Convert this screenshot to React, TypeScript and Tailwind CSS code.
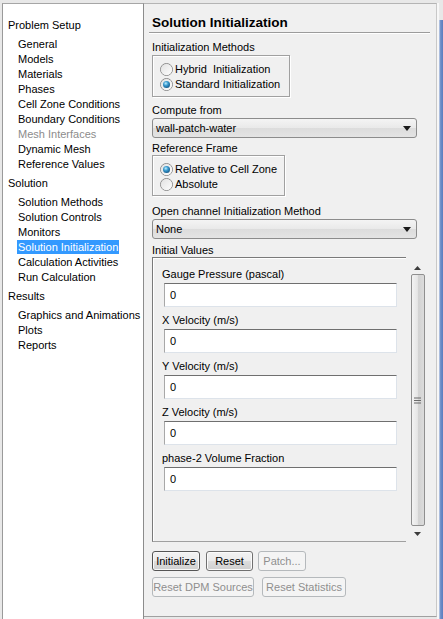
import React from "react";

function Radio({ checked }: { checked: boolean }) {
  return (
    <span className="relative inline-flex items-center justify-center w-[13px] h-[13px] rounded-full border border-[#8a8a8a] bg-[linear-gradient(135deg,#cfcfcf,#f7f7f7)] shrink-0">
      <span className="w-[11px] h-[11px] rounded-full bg-[linear-gradient(135deg,#e2e2e2,#fdfdfd)] flex items-center justify-center">
        {checked && (
          <span className="w-[7px] h-[7px] rounded-full bg-[radial-gradient(circle_at_40%_35%,#bfeefe_0%,#3a9bcf_35%,#155b8c_75%,#0b3c62_100%)]" />
        )}
      </span>
    </span>
  );
}

function RadioRow({ checked, label }: { checked: boolean; label: string }) {
  return (
    <div className="h-[15px] flex items-center gap-[2px] text-black">
      <Radio checked={checked} />
      <span className="leading-[15px] whitespace-pre">{label}</span>
    </div>
  );
}

function Select({ value }: { value: string }) {
  return (
    <div className="mt-[1px] w-[265px] h-[20px] rounded-[3px] border border-[#8c8c8c] bg-[linear-gradient(#f4f4f4,#e9e9e9_50%,#dcdcdc_51%,#e4e4e4)] flex items-center pl-[3px] pr-[5px] justify-between">
      <span className="leading-[18px] text-black">{value}</span>
      <svg width="8" height="5" viewBox="0 0 8 5">
        <polygon points="0,0 8,0 4,5" fill="#1a1a1a" />
      </svg>
    </div>
  );
}

function Field({ label, first }: { label: string; first?: boolean }) {
  return (
    <div className={first ? "pt-[9px]" : "pt-[6px]"}>
      <div className="h-[14px] leading-[14px] text-black">{label}</div>
      <div className="mt-[2px] ml-[2px] w-[233px] h-[24px] bg-white border-t border-l border-t-[#6f6f6f] border-l-[#a8a8a8] border-r border-b border-r-[#dde3ea] border-b-[#dde3ea] flex items-center pl-[5px] text-black">
        0
      </div>
    </div>
  );
}

function Btn({ label, w, disabled, focus }: { label: string; w: string; disabled?: boolean; focus?: boolean }) {
  const cls = disabled
    ? "border-[#b5b9bc] bg-[#f4f4f4] text-[#8f8f8f]"
    : focus
    ? "border-[#555555] bg-[linear-gradient(#f2f2f2,#ebebeb_50%,#dddddd_51%,#cfcfcf)] text-black shadow-[inset_0_0_0_1px_#f8f8f8]"
    : "border-[#707070] bg-[linear-gradient(#f2f2f2,#ebebeb_50%,#dddddd_51%,#cfcfcf)] text-black shadow-[inset_0_0_0_1px_#fbfbfb]";
  return (
    <div className={`${w} h-[20px] rounded-[3px] border flex items-center justify-center leading-[18px] ${cls}`}>
      {label}
    </div>
  );
}

const tree: { header: string; items: string[] }[] = [
  {
    header: "Problem Setup",
    items: [
      "General",
      "Models",
      "Materials",
      "Phases",
      "Cell Zone Conditions",
      "Boundary Conditions",
      "Mesh Interfaces",
      "Dynamic Mesh",
      "Reference Values",
    ],
  },
  {
    header: "Solution",
    items: [
      "Solution Methods",
      "Solution Controls",
      "Monitors",
      "Solution Initialization",
      "Calculation Activities",
      "Run Calculation",
    ],
  },
  { header: "Results", items: ["Graphics and Animations", "Plots", "Reports"] },
];

export default function App() {
  return (
    <div className="w-[443px] h-[619px] overflow-hidden flex bg-[#e8e8e8] pt-[3px] font-['Liberation_Sans',Arial,sans-serif] text-[11px]">
      {/* Left tree */}
      <div className="ml-[2px] w-[142px] h-[616px] bg-white border-l border-t border-r border-l-[#9a9a9a] border-t-[#a6a6a6] border-r-[#8c8c8c] pt-[14px]">
        {tree.map((g, gi) => (
          <div key={g.header} className={gi > 0 ? "mt-[4px]" : ""}>
            <div className="pl-[5px] h-[15px] leading-[15px] text-black">{g.header}</div>
            <div className="mt-[4px]">
              {g.items.map((it) => (
                <div key={it} className="pl-[15px] h-[15px] leading-[15px]">
                  {it === "Solution Initialization" ? (
                    <span className="inline-block bg-[#3399ff] text-white leading-[14px] px-[1px] -ml-[1px]">{it}</span>
                  ) : (
                    <span className={it === "Mesh Interfaces" ? "text-[#8c8c8c]" : "text-black"}>{it}</span>
                  )}
                </div>
              ))}
            </div>
          </div>
        ))}
      </div>

      {/* Right panel */}
      <div className="w-[293px] h-[614px] bg-[#f0f0f0] border-t border-b border-r border-t-[#b4b4b4] border-b-[#a0a0a0] border-r-[#c8c8c8] pl-[8px] flex flex-col">
        <div className="mt-[11px] h-[16px] leading-[16px] text-[13.5px] font-bold text-black">Solution Initialization</div>
        <div className="mt-[1px] -ml-[3px] w-[281px] h-px bg-[#9c9c9c] shadow-[0_1px_0_#ffffff]" />

        <div className="mt-[7px] h-[14px] leading-[14px] text-black">Initialization Methods</div>
        <div className="mt-[1px] w-[138px] border border-[#a0a0a0] shadow-[inset_1px_1px_0_#ffffff,1px_1px_0_#ffffff] pl-[7px] pt-[6px] pb-[4px]">
          <RadioRow checked={false} label="Hybrid  Initialization" />
          <RadioRow checked={true} label="Standard Initialization" />
        </div>

        <div className="mt-[6px] h-[14px] leading-[14px] text-black">Compute from</div>
        <Select value="wall-patch-water" />

        <div className="mt-[4px] h-[13px] leading-[13px] text-black">Reference Frame</div>
        <div className="w-[133px] border border-[#a0a0a0] shadow-[inset_1px_1px_0_#ffffff,1px_1px_0_#ffffff] pl-[7px] pt-[6px] pb-[3px]">
          <RadioRow checked={true} label="Relative to Cell Zone" />
          <RadioRow checked={false} label="Absolute" />
        </div>

        <div className="mt-[8px] h-[14px] leading-[14px] text-black">Open channel Initialization Method</div>
        <Select value="None" />

        <div className="mt-[4px] h-[14px] leading-[14px] text-black">Initial Values</div>
        <div className="flex h-[288px]">
          <div className="w-[254px] h-[285px] border-t border-l border-b border-t-[#7a7a7a] border-l-[#7a7a7a] border-b-[#a0a0a0] shadow-[inset_1px_1px_0_#ffffff] pl-[9px]">
            <Field first label="Gauge Pressure (pascal)" />
            <Field label="X Velocity (m/s)" />
            <Field label="Y Velocity (m/s)" />
            <Field label="Z Velocity (m/s)" />
            <Field label="phase-2 Volume Fraction" />
          </div>
          <div className="ml-[4px] mt-[4px] w-[15px] h-[284px] flex flex-col items-center">
            <div className="h-[13px] flex items-center justify-center">
              <svg width="7" height="4" viewBox="0 0 7 4">
                <polygon points="3.5,0 7,4 0,4" fill="#3c3c3c" />
              </svg>
            </div>
            <div className="w-[14px] h-[252px] rounded-[2px] border border-[#8f8f8f] bg-[linear-gradient(90deg,#f3f3f3,#e6e6e6_45%,#d2d2d2_55%,#dcdcdc)] flex items-center justify-center">
              <svg width="7" height="7" viewBox="0 0 7 7">
                <rect x="0" y="0.5" width="7" height="1" fill="#6a6a6a" />
                <rect x="0" y="3" width="7" height="1" fill="#6a6a6a" />
                <rect x="0" y="5.5" width="7" height="1" fill="#6a6a6a" />
              </svg>
            </div>
            <div className="h-[15px] flex items-center justify-center">
              <svg width="7" height="4" viewBox="0 0 7 4">
                <polygon points="0,0 7,0 3.5,4" fill="#3c3c3c" />
              </svg>
            </div>
          </div>
        </div>

        <div className="mt-[6px] flex">
          <div>
            <Btn label="Initialize" w="w-[48px]" focus />
          </div>
          <div className="ml-[6px]">
            <Btn label="Reset" w="w-[47px]" />
          </div>
          <div className="ml-[5px]">
            <Btn label="Patch..." w="w-[48px]" disabled />
          </div>
        </div>
        <div className="mt-[6px] flex">
          <div>
            <Btn label="Reset DPM Sources" w="w-[102px]" disabled />
          </div>
          <div className="ml-[8px]">
            <Btn label="Reset Statistics" w="w-[84px]" disabled />
          </div>
        </div>
      </div>

      {/* Right window edge */}
      <div className="w-[2px] h-[616px] bg-[#f7f7f7]" />
      <div className="w-[4px] h-[616px] flex flex-col">
        <div className="h-[17px] bg-[#e8e8e8]" />
        <div className="flex-1 bg-[linear-gradient(90deg,#c7d3ea,#6f8fc8_40%,#5a7dbf)]" />
      </div>
    </div>
  );
}
